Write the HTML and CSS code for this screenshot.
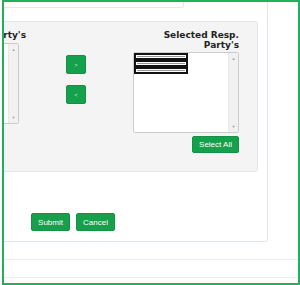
FILE: index.html
```html
<!DOCTYPE html>
<html lang="en">
<head>
    <meta charset="utf-8" />
    <title>Resp. Party</title>
    <link rel="stylesheet" href="styles.css">
</head>
<body>
    <div class="frame">
        <div class="card">
            <div class="top_strip"></div>
            <div class="panel">
                <div class="col_left">
                    <div class="label label_left"><span>Available Resp. Party's</span></div>
                    <div class="listbox listbox_left">
                        <div class="scroll">
                            <span class="arrow">&#9650;</span>
                            <span class="arrow">&#9660;</span>
                        </div>
                    </div>
                </div>
                <div class="col_mid">
                    <button class="btn btn_move">&gt;</button>
                    <button class="btn btn_move">&lt;</button>
                </div>
                <div class="col_right">
                    <div class="label">Selected Resp. Party's</div>
                    <div class="listbox">
                        <div class="items">
                            <div class="item"></div>
                            <div class="item"></div>
                            <div class="item"></div>
                        </div>
                        <div class="scroll">
                            <span class="arrow">&#9650;</span>
                            <span class="arrow">&#9660;</span>
                        </div>
                    </div>
                    <div class="select_row">
                        <button class="btn btn_select">Select All</button>
                    </div>
                </div>
            </div>
            <div class="actions">
                <button class="btn btn_action">Submit</button>
                <button class="btn btn_action">Cancel</button>
            </div>
        </div>
        <div class="footer"></div>
    </div>
</body>
</html>
```

FILE: styles.css
```css
body {
    margin: 0;
    background-color: white;
    font-family: "Liberation Sans", Arial, sans-serif;
}

.frame {
    margin-left: 2px;
    width: 298px;
    height: 285px;
    box-sizing: border-box;
    border: 2px solid rgb(33, 176, 92);
    overflow: hidden;
    background-color: white;
}

.card {
    margin-top: -20px;
    margin-left: -124px;
    width: 388px;
    box-sizing: border-box;
    padding: 0 9px 10px 10px;
    border: 1px solid rgb(224, 230, 237);
    border-radius: 3px;
    background-color: white;
}

.top_strip {
    height: 24px;
    margin-right: 74px;
    border: 1px solid rgb(232, 232, 232);
    border-top: none;
    border-radius: 0 0 3px 3px;
}

.panel {
    display: flex;
    align-items: flex-start;
    margin-top: 13px;
    padding: 8px 18px 18px 10px;
    background-color: rgb(244, 244, 244);
    border: 1px solid rgb(226, 230, 235);
    border-radius: 3px;
}

.label {
    font-family: "DejaVu Sans", Verdana, sans-serif;
    font-weight: bold;
    font-size: 9px;
    line-height: 10px;
    color: rgb(34, 34, 34);
    text-align: right;
}

.label_left {
    display: flex;
    justify-content: flex-end;
    white-space: nowrap;
}

.col_left {
    width: 124px;
}

.listbox {
    display: flex;
    height: 81px;
    box-sizing: border-box;
    margin-top: 2px;
    border: 1px solid rgb(204, 204, 204);
    border-radius: 2px;
    background-color: white;
}

.listbox_left {
    margin-top: 3px;
    margin-right: 7px;
}

.items {
    flex: 1;
    padding-top: 0;
}

.item {
    width: 54px;
    height: 7px;
    box-sizing: border-box;
    border: 2px solid rgb(17, 17, 17);
    background-color: rgb(150, 150, 150);
    box-shadow: inset 0 0 0 1px white;
}

.scroll {
    display: flex;
    flex-direction: column;
    justify-content: space-between;
    width: 9px;
    margin-left: auto;
    padding: 3px 0;
    background-color: rgb(241, 241, 241);
    border-left: 1px solid rgb(232, 232, 232);
}

.arrow {
    font-size: 4px;
    line-height: 5px;
    color: rgb(160, 160, 160);
    text-align: center;
}

.col_mid {
    display: flex;
    flex-direction: column;
    gap: 11px;
    margin-left: 40px;
    margin-top: 25px;
}

.col_right {
    width: 106px;
    margin-left: 47px;
}

.btn {
    padding: 0;
    font-family: "Liberation Sans", Arial, sans-serif;
    color: white;
    background-color: rgb(21, 160, 75);
    border: 1px solid rgb(18, 146, 68);
    border-radius: 2px;
}

.btn_move {
    width: 20px;
    height: 19px;
    font-size: 6px;
    color: rgb(200, 235, 210);
}

.select_row {
    display: flex;
    justify-content: flex-end;
    margin-top: 3px;
}

.btn_select {
    width: 47px;
    height: 17px;
    font-size: 8px;
}

.actions {
    display: flex;
    gap: 6px;
    margin-top: 41px;
    padding-left: 140px;
}

.btn_action {
    width: 39px;
    height: 18px;
    font-size: 8px;
}

.footer {
    height: 17px;
    margin-top: 17px;
    border-top: 1px solid rgb(236, 236, 236);
    border-bottom: 1px solid rgb(236, 236, 236);
}
```
